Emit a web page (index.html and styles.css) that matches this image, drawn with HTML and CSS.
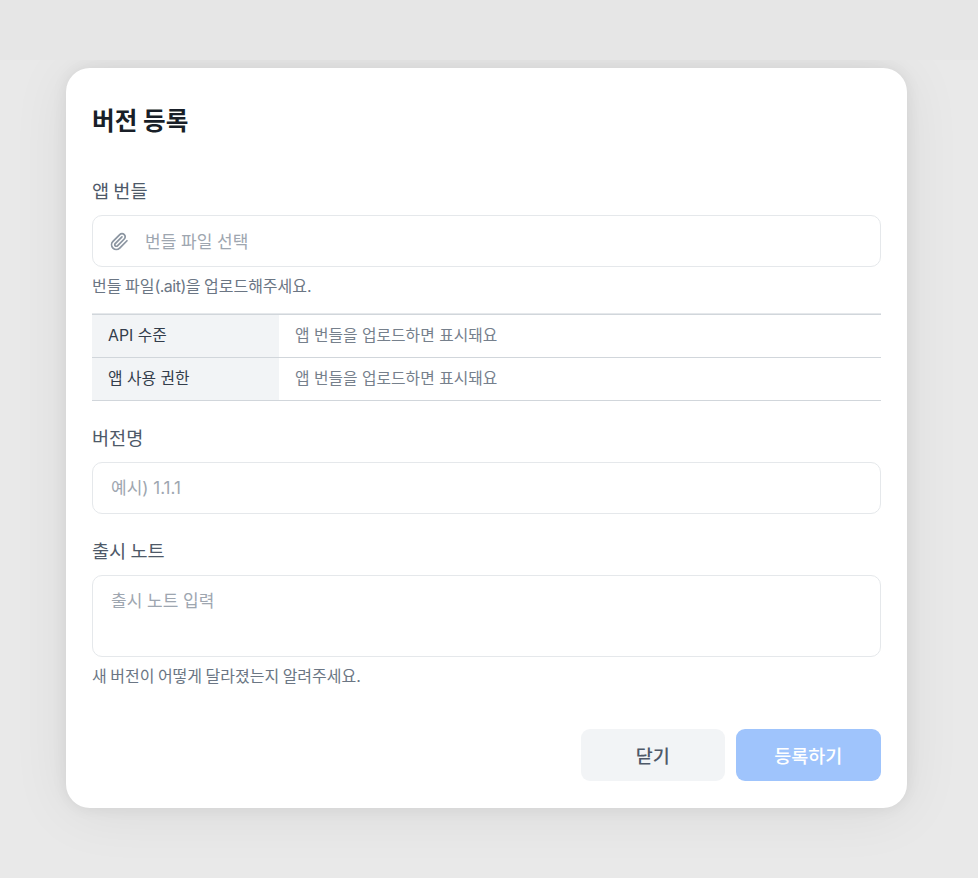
FILE: index.html
```html
<!DOCTYPE html>
<html lang="ko">
<head>
    <meta charset="UTF-8">
    <title>버전 등록</title>
    <link rel="stylesheet" href="styles.css">
</head>
<body>
    <div class="backdrop">
        <form class="dialog">
            <h2 class="dialog-title">버전 등록</h2>

            <div class="field field-bundle">
                <label class="field-label">앱 번들</label>
                <div class="control file-picker">
                    <svg class="clip" viewBox="0 0 24 24" width="19" height="19" fill="none" stroke="#8b95a1" stroke-width="2.2" stroke-linecap="round" stroke-linejoin="round">
                        <path d="m21.44 11.05-9.19 9.19a6 6 0 0 1-8.49-8.49l8.57-8.57A4 4 0 1 1 18 8.84l-8.59 8.57a2 2 0 0 1-2.83-2.83l8.49-8.48"/>
                    </svg>
                    <span class="placeholder">번들 파일 선택</span>
                </div>
                <p class="hint">번들 파일<span class="ext">(.ait)</span>을 업로드해주세요.</p>
            </div>

            <div class="info">
                <div class="info-row">
                    <div class="info-key">API 수준</div>
                    <div class="info-value">앱 번들을 업로드하면 표시돼요</div>
                </div>
                <div class="info-row">
                    <div class="info-key">앱 사용 권한</div>
                    <div class="info-value">앱 번들을 업로드하면 표시돼요</div>
                </div>
            </div>

            <div class="field">
                <label class="field-label">버전명</label>
                <input class="control text-input" type="text" placeholder="예시) 1.1.1">
            </div>

            <div class="field">
                <label class="field-label">출시 노트</label>
                <textarea class="control text-area" placeholder="출시 노트 입력"></textarea>
                <p class="hint">새 버전이 어떻게 달라졌는지 알려주세요.</p>
            </div>

            <div class="actions">
                <button class="btn btn-close" type="button">닫기</button>
                <button class="btn btn-submit" type="button">등록하기</button>
            </div>
        </form>
    </div>
</body>
</html>
```

FILE: styles.css
```css
*{
    margin: 0;
    padding: 0;
    box-sizing: border-box;
}
html,body{
    height: 100%;
}
body{
    background: #e6e6e6;
    font-family: Inter, "Noto Sans CJK KR", sans-serif;
    overflow: hidden;
}
.backdrop{
    height: 818px;
    margin-top: 60px;
    padding-top: 8px;
    overflow: hidden;
    background: #e9e9e9;
}
.dialog{
    width: 841px;
    height: 740px;
    margin-left: 66px;
    padding: 27px 26.5px 0 26px;
    background: #fff;
    border-radius: 24px;
    box-shadow: 0 4px 60px rgba(0,0,0,.07), 0 0 16px rgba(0,0,0,.07);
}
.dialog-title{
    height: 52px;
    font-size: 24.6px;
    line-height: 52px;
    font-weight: 700;
    color: #191f28;
}
.field{
    margin-top: 26px;
}
.field-bundle{
    margin-top: 33px;
}
.field-label{
    display: block;
    height: 24px;
    margin-bottom: 11px;
    font-size: 18.6px;
    line-height: 22px;
    word-spacing: -1px;
    color: #4e5968;
}
.control{
    display: block;
    width: 100%;
    border: 1.5px solid #e5e8eb;
    border-radius: 10px;
    background: #fff;
    font-family: inherit;
    font-size: 17px;
    color: #333d4b;
    outline: none;
}
.control::placeholder,
.placeholder{
    color: #9ea6b0;
}
.file-picker{
    display: flex;
    align-items: center;
    height: 52px;
    padding-left: 17px;
    gap: 16px;
}
.clip{
    flex: none;
}
.placeholder{
    padding-bottom: 2px;
}
.text-input{
    height: 52px;
    padding: 0 18px;
}
.text-area{
    height: 82px;
    padding: 13px 18px;
    line-height: 25px;
    resize: none;
}
.hint{
    margin-top: 7px;
    font-size: 16px;
    line-height: 24px;
    word-spacing: -1px;
    color: #6b7684;
}
.ext{
    letter-spacing: -.5px;
}
.info{
    margin-top: 16px;
    border-top: 1px solid #d1d6db;
    box-shadow: 0 -1px 0 #e5e8eb;
}
.info-row{
    display: flex;
    height: 43px;
    border-bottom: 1px solid #d1d6db;
    font-size: 15.8px;
    line-height: 42px;
}
.info-key{
    width: 187px;
    padding-left: 16px;
    background: #f2f4f6;
    color: #333d4b;
}
.info-value{
    padding-left: 16px;
    color: #76808c;
}
.actions{
    display: flex;
    justify-content: flex-end;
    gap: 11px;
    margin-top: 41px;
}
.btn{
    width: 144.5px;
    height: 52px;
    border: none;
    border-radius: 9px;
    font-family: inherit;
    font-size: 18.5px;
    font-weight: 500;
}
.btn-close{
    background: #f2f4f6;
    color: #4e5968;
}
.btn-submit{
    background: #9fc4fc;
    color: #fff;
}
```
